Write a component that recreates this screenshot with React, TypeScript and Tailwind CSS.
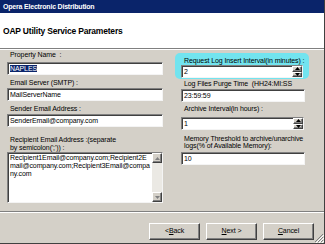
import React from 'react';

const sunken = "bg-white border border-t-[#808080] border-l-[#808080] border-b-[#f4f4f4] border-r-[#f4f4f4] shadow-[inset_1px_1px_0_#404040]";
const raised = "bg-[#d4d0c8] border border-t-white border-l-white border-b-[#404040] border-r-[#404040] shadow-[inset_-1px_-1px_0_#808080]";

function Spin() {
  return (
    <div className="flex flex-col w-[10px] h-full">
      <div className={`${raised} flex-1 flex items-center justify-center`}>
        <svg width="5" height="3" viewBox="0 0 5 3"><path d="M2.5 0 L5 3 L0 3 Z" fill="#000" /></svg>
      </div>
      <div className={`${raised} flex-1 flex items-center justify-center`}>
        <svg width="5" height="3" viewBox="0 0 5 3"><path d="M0 0 L5 0 L2.5 3 Z" fill="#000" /></svg>
      </div>
    </div>
  );
}

function Field({ value, spin, selected }: { value: string; spin?: boolean; selected?: boolean }) {
  return (
    <div className={`${sunken} h-[13px] flex items-stretch`}>
      <div className="flex-1 pl-[2px] leading-[11px]">
        {selected ? <span className="bg-[#0a246a] text-white">{value}</span> : value}
      </div>
      {spin && <Spin />}
    </div>
  );
}

function Label({ children }: { children: React.ReactNode }) {
  return <div className="h-[13px] flex items-end pb-[1px] leading-[8px] pl-[3px] whitespace-nowrap">{children}</div>;
}

function Btn({ children }: { children: React.ReactNode }) {
  return (
    <div className={`${raised} w-[51px] h-[17px] flex items-center justify-center`}>{children}</div>
  );
}

export default function App() {
  return (
    <div className="w-[325px] h-[244px] flex flex-col bg-[#d4d0c8] text-[7px] tracking-[-0.1px] text-black border-r border-b border-[#404040] overflow-hidden" style={{ fontFamily: '"Liberation Sans", Arial, sans-serif' }}>
      <div className="h-[13px] bg-[#0a246a] text-white font-bold text-[7px] tracking-[-0.2px] leading-[13px] pl-[3px]">Opera Electronic Distribution</div>
      <div className="h-[35px] bg-white flex items-end pl-[3px] pb-[10px] font-bold text-[8.5px] tracking-[-0.2px]">OAP Utility Service Parameters</div>
      <div className="border-t border-[#808080]" />
      <div className="border-t border-white" />

      <div className="flex-1 flex gap-[18px] pl-[7px]">
        {/* left column */}
        <div className="w-[156px] flex flex-col">
          <div className="h-[12px] leading-[9px] pl-[3px]">Property Name&nbsp; :</div>
          <Field value="NAPLES" selected />
          <Label>Email Server (SMTP) :</Label>
          <Field value="MailServerName" />
          <Label>Sender Email Address :</Label>
          <Field value="SenderEmail@company.com" />
          <div className="leading-[8px] pl-[3px] pt-[9px]">Recipient Email Address :(separate<br />by semicolon(';')) :</div>
          <div className={`${sunken} h-[51px] flex`}>
            <div className="flex-1 pl-[2px] pt-[1px] leading-[8px] break-all">Recipient1Email@company.com;Recipient2Email@company.com;Recipient3Email@company.com</div>
            <div className="w-[10px] flex flex-col bg-[#ebe9e4]">
              <div className={`${raised} h-[10px] flex items-center justify-center`}>
                <svg width="5" height="3" viewBox="0 0 5 3"><path d="M2.5 0 L5 3 L0 3 Z" fill="#808080" /></svg>
              </div>
              <div className="flex-1" />
              <div className={`${raised} h-[10px] flex items-center justify-center`}>
                <svg width="5" height="3" viewBox="0 0 5 3"><path d="M0 0 L5 0 L2.5 3 Z" fill="#808080" /></svg>
              </div>
            </div>
          </div>
        </div>

        {/* right column */}
        <div className="w-[134px] flex flex-col">
          <div className="bg-[#72e4ef] rounded-[5px] px-[6px] pt-[3px] pb-[1px] mt-[3px] -ml-[6px] w-[134px]">
            <div className="h-[9px] leading-[9px] pl-[3px] whitespace-nowrap">Request Log Insert Interval(in minutes) :</div>
            <Field value="2" spin />
          </div>
          <div className="h-[10px] leading-[10px] pl-[3px] w-[124px] whitespace-nowrap">Log Files Purge Time&nbsp; (HH24:MI:SS</div>
          <div className="w-[124px]"><Field value="23:59:59" /></div>
          <div className="h-[15px] leading-[14px] pl-[3px]">Archive Interval(in hours) :</div>
          <div className="w-[123px]"><Field value="1" spin /></div>
          <div className="leading-[7px] pl-[3px] pt-[5px] pb-[3px] whitespace-nowrap">Memory Threshold to archive/unarchive<br />logs(% of Available Memory):</div>
          <div className="w-[124px]"><Field value="10" /></div>
        </div>
      </div>

      <div className="border-t border-[#808080]" />
      <div className="border-t border-white" />
      <div className="h-[30px] flex items-start justify-end gap-[6px] pr-[10px] pt-[10px] relative">
        <Btn><span>&lt;<u>B</u>ack</span></Btn>
        <Btn><span><u>N</u>ext &gt;</span></Btn>
        <Btn><span><u>C</u>ancel</span></Btn>
        <svg className="absolute right-0 bottom-0" width="10" height="10" viewBox="0 0 10 10">
          <path d="M9 1 L1 9 M9 4 L4 9 M9 7 L7 9" stroke="#808080" strokeWidth="1" />
          <path d="M10 2 L2 10 M10 5 L5 10 M10 8 L8 10" stroke="#ffffff" strokeWidth="1" />
        </svg>
      </div>
    </div>
  );
}
